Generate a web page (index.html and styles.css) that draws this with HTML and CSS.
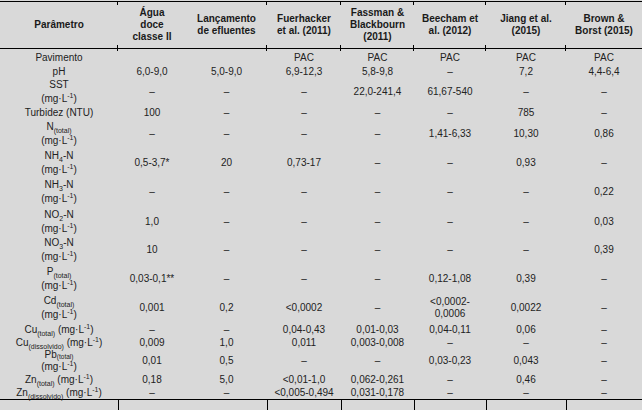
FILE: index.html
```html
<!DOCTYPE html>
<html lang="pt">
<head>
<meta charset="utf-8">
<title>Parâmetros</title>
<link rel="stylesheet" href="styles.css">
</head>
<body>
<table class="tbl">
  <colgroup>
    <col class="c1"><col class="c2"><col class="c3"><col class="c4"><col class="c5"><col class="c6"><col class="c7"><col class="c8">
  </colgroup>
  <thead>
    <tr>
      <th class="sep">Parâmetro</th>
      <th>Água<br>doce<br>classe II</th>
      <th class="sep">Lançamento<br>de efluentes</th>
      <th class="sep">Fuerhacker<br>et al. (2011)</th>
      <th class="sep">Fassman &amp;<br>Blackbourn<br>(2011)</th>
      <th class="sep">Beecham et<br>al. (2012)</th>
      <th class="sep">Jiang et al.<br>(2015)</th>
      <th>Brown &amp;<br>Borst (2015)</th>
    </tr>
  </thead>
  <tbody>
    <tr class="r-pav">
      <td class="tk">Pavimento</td><td></td><td class="tk"></td><td class="tk">PAC</td><td class="tk">PAC</td><td class="tk">PAC</td><td class="tk">PAC</td><td>PAC</td>
    </tr>
    <tr class="r13">
      <td>pH</td><td>6,0-9,0</td><td>5,0-9,0</td><td>6,9-12,3</td><td>5,8-9,8</td><td>–</td><td>7,2</td><td>4,4-6,4</td>
    </tr>
    <tr class="r27">
      <td>SST<br>(mg·L<sup>-1</sup>)</td><td>–</td><td>–</td><td>–</td><td>22,0-241,4</td><td>61,67-540</td><td>–</td><td>–</td>
    </tr>
    <tr class="r13">
      <td>Turbidez (NTU)</td><td>100</td><td>–</td><td>–</td><td>–</td><td>–</td><td>785</td><td>–</td>
    </tr>
    <tr class="r30">
      <td>N<sub>(total)</sub><br>(mg·L<sup>-1</sup>)</td><td>–</td><td>–</td><td>–</td><td>–</td><td>1,41-6,33</td><td>10,30</td><td>0,86</td>
    </tr>
    <tr class="r28">
      <td>NH<sub>4</sub>-N<br>(mg·L<sup>-1</sup>)</td><td>0,5-3,7*</td><td>20</td><td>0,73-17</td><td>–</td><td>–</td><td>0,93</td><td>–</td>
    </tr>
    <tr class="r30">
      <td>NH<sub>3</sub>-N<br>(mg·L<sup>-1</sup>)</td><td>–</td><td>–</td><td>–</td><td>–</td><td>–</td><td>–</td><td>0,22</td>
    </tr>
    <tr class="r29">
      <td>NO<sub>2</sub>-N<br>(mg·L<sup>-1</sup>)</td><td>1,0</td><td>–</td><td>–</td><td>–</td><td>–</td><td>–</td><td>0,03</td>
    </tr>
    <tr class="r28">
      <td>NO<sub>3</sub>-N<br>(mg·L<sup>-1</sup>)</td><td>10</td><td>–</td><td>–</td><td>–</td><td>–</td><td>–</td><td>0,39</td>
    </tr>
    <tr class="r29">
      <td>P<sub>(total)</sub><br>(mg·L<sup>-1</sup>)</td><td>0,03-0,1**</td><td>–</td><td>–</td><td>–</td><td>0,12-1,08</td><td>0,39</td><td>–</td>
    </tr>
    <tr class="r30">
      <td>Cd<sub>(total)</sub><br>(mg·L<sup>-1</sup>)</td><td>0,001</td><td>0,2</td><td>&lt;0,0002</td><td>–</td><td class="two">&lt;0,0002-<br>0,0006</td><td>0,0022</td><td>–</td>
    </tr>
    <tr class="r13">
      <td>Cu<sub>(total)</sub> (mg·L<sup>-1</sup>)</td><td>–</td><td>–</td><td>0,04-0,43</td><td>0,01-0,03</td><td>0,04-0,11</td><td>0,06</td><td>–</td>
    </tr>
    <tr class="r13">
      <td>Cu<sub>(dissolvido)</sub> (mg·L<sup>-1</sup>)</td><td>0,009</td><td>1,0</td><td>0,011</td><td>0,003-0,008</td><td>–</td><td>–</td><td>–</td>
    </tr>
    <tr class="r22">
      <td>Pb<sub class="hi">(total)</sub><br>(mg·L<sup>-1</sup>)</td><td>0,01</td><td>0,5</td><td>–</td><td>–</td><td>0,03-0,23</td><td>0,043</td><td>–</td>
    </tr>
    <tr class="r14">
      <td>Zn<sub>(total)</sub> (mg·L<sup>-1</sup>)</td><td>0,18</td><td>5,0</td><td>&lt;0,01-1,0</td><td>0,062-0,261</td><td>–</td><td>0,46</td><td>–</td>
    </tr>
    <tr class="r13 last">
      <td>Zn<sub>(dissolvido)</sub> (mg·L<sup>-1</sup>)</td><td>–</td><td>–</td><td>&lt;0,005-0,494</td><td>0,031-0,178</td><td>–</td><td>–</td><td>–</td>
    </tr>
    <tr class="tail">
      <td class="vr"></td><td></td><td class="vr"></td><td class="vr"></td><td class="vr"></td><td class="vr"></td><td class="vr"></td><td></td>
    </tr>
  </tbody>
</table>
</body>
</html>
```

FILE: styles.css
```css
html, body {
  margin: 0;
  padding: 0;
  background: #d9d9d9;
}

body {
  font-family: "Liberation Sans", Arial, sans-serif;
  font-size: 10px;
  color: #222;
  overflow: hidden;
}

.tbl {
  border-collapse: collapse;
  table-layout: fixed;
  width: 642px;
  margin-top: 1px;
}

.c1 { width: 118px; }
.c2 { width: 68px; }
.c3 { width: 81px; }
.c4 { width: 74px; }
.c5 { width: 73px; }
.c6 { width: 72px; }
.c7 { width: 80px; }
.c8 { width: 76px; }

.tbl th {
  font-weight: bold;
  font-size: 10px;
  line-height: 12px;
  height: 46px;
  padding: 0;
  text-align: center;
  vertical-align: middle;
  border-top: 1px solid #000;
  border-bottom: 1px solid #000;
  color: #1a1a1a;
}

.tbl th.sep {
  background:
    linear-gradient(#000, #000) right top / 1px 3px no-repeat,
    linear-gradient(#000, #000) right bottom / 1px 3px no-repeat;
}

.tbl td {
  padding: 0;
  text-align: center;
  vertical-align: middle;
  line-height: 13px;
  white-space: nowrap;
}

.tbl td.tk {
  background: linear-gradient(#000, #000) right top / 1px 2px no-repeat;
}

.r-pav td { height: 16px; }
.r13 td { height: 13px; }
.r14 td { height: 14px; }
.r22 td { height: 22px; line-height: 11.5px; }
.r27 td { height: 27px; line-height: 14px; }
.r28 td { height: 28px; line-height: 14px; }
.r29 td { height: 29px; line-height: 14px; }
.r30 td { height: 30px; line-height: 14px; }

.tbl td.two { line-height: 12px; }

.last td { border-bottom: 1px solid #000; }

.tail td { height: 11px; }
.tail td.vr { border-right: 1px solid #000; }

sub, sup {
  font-size: 7px;
  line-height: 0;
}

sub { vertical-align: -3px; }
sub.hi { font-size: 6.5px; vertical-align: -1px; }
sup { vertical-align: 4px; }
```
